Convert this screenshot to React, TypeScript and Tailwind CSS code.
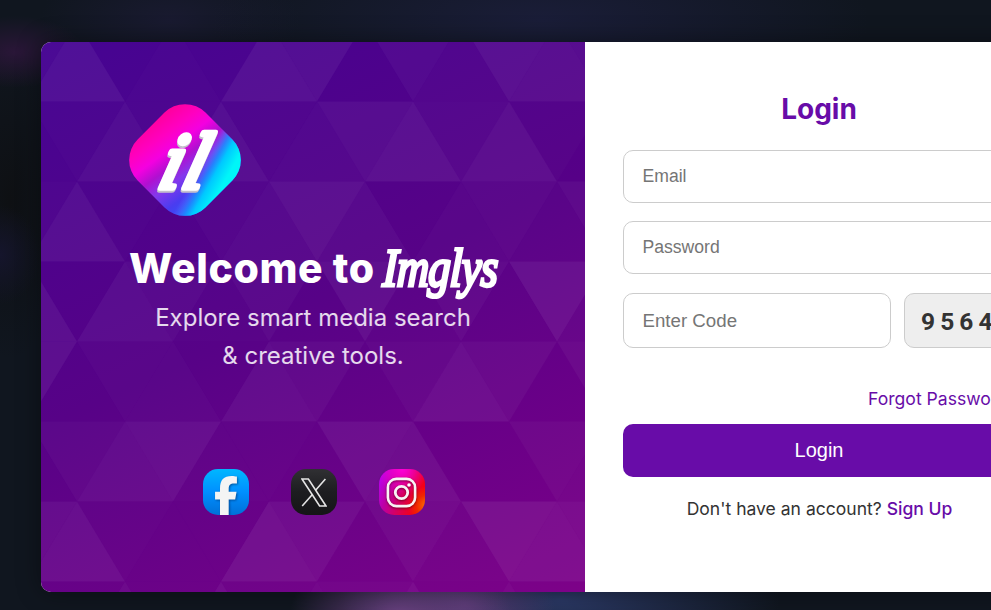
import { FaFacebookF } from "react-icons/fa6";

// Brightness of every triangle in the left panel's mosaic, row by row.
const TONES: number[][] = [
  [5, 8, 2, 3, 2, 8, 7, 1, 5, 3, 8, 7, 6],
  [2, 3, 6, 3, 7, 3, 4, 6, 8, 4, 7, 2, 0],
  [3, 7, 2, 1, 3, 5, 8, 5, 1, 3, 4, 2, 5],
  [7, 1, 6, 5, 2, 5, 1, 7, 2, 5, 1, 8, 3],
  [7, 1, 3, 3, 1, 6, 5, 1, 4, 7, 5, 0, 5],
  [1, 4, 6, 7, 2, 2, 1, 7, 6, 0, 0, 4, 3],
  [6, 7, 2, 1, 1, 8, 6, 1, 5, 2, 8, 7, 6],
  [1, 1, 5, 1, 6, 2, 4, 3, 6, 1, 4, 1, 1],
];

function Mosaic() {
  return (
    <svg className="absolute inset-0 h-full w-full" viewBox="41 42 544 550" aria-hidden="true">
      {TONES.map((row, r) =>
        row.map((tone, j) => {
          const x = 29 + j * 48;
          const top = 21.5 + r * 80;
          const bottom = top + 80;
          const up = (r + j) % 2 === 1;
          const points = up
            ? `${x},${top} ${x - 48},${bottom} ${x + 48},${bottom}`
            : `${x},${bottom} ${x - 48},${top} ${x + 48},${top}`;
          return <polygon key={`${r}-${j}`} points={points} fill="#fff" fillOpacity={tone * 0.0082} />;
        }),
      )}
    </svg>
  );
}

function Logo() {
  return (
    <svg className="h-28 w-28" viewBox="0 0 112 112" role="img" aria-label="Imglys">
      <defs>
        <linearGradient id="mark" gradientUnits="userSpaceOnUse" x1="22" y1="20" x2="84" y2="104">
          <stop offset="0" stopColor="#ff00a0" />
          <stop offset="0.16" stopColor="#ff00c0" />
          <stop offset="0.3" stopColor="#f400e0" />
          <stop offset="0.44" stopColor="#b010d0" />
          <stop offset="0.58" stopColor="#8438ec" />
          <stop offset="0.75" stopColor="#4a3cf0" />
          <stop offset="1" stopColor="#2060ff" />
        </linearGradient>
        <linearGradient id="cyan" gradientUnits="userSpaceOnUse" x1="73" y1="58" x2="103" y2="75">
          <stop offset="0" stopColor="#6a60ff" stopOpacity="0" />
          <stop offset="0.3" stopColor="#1c8cff" stopOpacity="0.85" />
          <stop offset="0.5" stopColor="#00c8ff" />
          <stop offset="0.85" stopColor="#00f6f8" />
        </linearGradient>
        <clipPath id="tile">
          <rect x="8" y="8" width="96" height="96" rx="29" transform="rotate(45 56 56)" />
        </clipPath>
      </defs>
      <g clipPath="url(#tile)">
        <rect width="112" height="112" fill="url(#mark)" />
        <rect width="112" height="112" fill="url(#cyan)" />
      </g>
      <g
        transform="translate(27 84) skewX(-15)"
        fontFamily="'Liberation Serif', serif"
        fontSize="80"
        fontStyle="italic"
        strokeLinejoin="round"
        strokeLinecap="round"
        strokeWidth="5.5"
      >
        <text x="0" y="2" textLength="46" fill="#c4c0cc" stroke="#c4c0cc">il</text>
        <text x="0" y="0" textLength="46" fill="#fff" stroke="#fff">il</text>
      </g>
    </svg>
  );
}

function XGlyph() {
  return (
    <svg className="h-[29px] w-[26px]" viewBox="0 0 26 29" fill="none" stroke="#e4e4e4" strokeWidth="1.6" aria-hidden="true">
      <path d="M1 1H7.4L25 28H18.6Z" />
      <path d="M24.4 1L14.6 12.2M11.6 16.2L1.2 28" />
    </svg>
  );
}

function InstagramGlyph() {
  return (
    <svg className="h-[31px] w-[31px] drop-shadow-[0_1px_1px_rgba(60,0,0,.6)]" viewBox="0 0 31 31" fill="none" stroke="#f8f3f5" aria-hidden="true">
      <rect x="1.9" y="1.9" width="27.2" height="27.2" rx="8.5" strokeWidth="2.6" />
      <circle cx="15.5" cy="15.5" r="6.2" strokeWidth="2.8" />
      <circle cx="23" cy="8" r="1.8" fill="#fff" stroke="none" />
    </svg>
  );
}

const FIELD =
  "block w-full rounded-[10px] border border-[#ccc] bg-white px-[18.5px] font-['Liberation_Sans',Arial,sans-serif] placeholder:text-[#757575] placeholder:opacity-100 outline-none";

export default function App() {
  return (
    <div className="h-[610px] w-full overflow-hidden bg-[#10161f] bg-[radial-gradient(ellipse_110px_70px_at_400px_615px,#68407f_0%,transparent_100%),radial-gradient(ellipse_90px_60px_at_465px_605px,#583b76_0%,transparent_100%),radial-gradient(ellipse_220px_65px_at_560px_600px,#2b3966_0%,transparent_100%),radial-gradient(ellipse_70px_36px_at_15px_52px,#2a1638_0%,transparent_100%),radial-gradient(ellipse_40px_50px_at_0px_255px,#15152c_0%,transparent_100%),radial-gradient(ellipse_330px_100px_at_540px_20px,#1a1d38_0%,transparent_100%),radial-gradient(ellipse_130px_60px_at_170px_20px,#191a30_0%,transparent_100%),radial-gradient(ellipse_60px_160px_at_10px_200px,#0e1013_0%,transparent_100%)] pt-[42px] pl-[41px] font-[Inter,sans-serif]">
      <main className="flex h-[550px] w-[1012px] overflow-hidden rounded-[10px] bg-white shadow-[0_0_24px_rgba(0,0,0,.4)]">
        <section className="relative h-full w-[544px] shrink-0 bg-[linear-gradient(155deg,#430091_0%,#560087_48%,#7c0088_100%)]">
          <Mosaic />
          <div className="relative flex h-full flex-col items-center pt-[62px]">
            <div className="w-[368px]">
              <Logo />
            </div>
            <h1 className="mt-[21px] flex h-[62px] w-[368px] items-center whitespace-nowrap text-white">
              <span className="w-[254px] shrink-0 text-[41px] leading-[62px] font-extrabold tracking-[0.6px]">Welcome to</span>
              <span className="origin-left scale-x-[0.82] -skew-x-3 font-['Liberation_Serif',serif] text-[54px] leading-[62px] font-normal tracking-[-0.7px] italic [-webkit-text-stroke:3.2px_#fff]">Imglys</span>
            </h1>
            <p className="text-center text-[24px] leading-[38px] text-white/85">
              Explore smart media search
              <br />
              &amp; creative tools.
            </p>
            <div className="mt-[94px] ml-px flex gap-[42px]">
              <a className="flex h-[46px] w-[46px] items-end justify-center overflow-hidden rounded-[15px] bg-linear-to-b from-[#00b7ff] via-[#008fff] to-[#0070d8]">
                <FaFacebookF className="h-[40px] w-[24px] translate-y-px text-[#f4f4f4] drop-shadow-[1px_1px_1px_rgba(0,40,100,.6)]" preserveAspectRatio="none" />
              </a>
              <a className="flex h-[46px] w-[46px] items-center justify-center rounded-[15px] bg-linear-to-b from-[#303033] via-[#1d1d20] to-[#151517]">
                <XGlyph />
              </a>
              <a className="flex h-[46px] w-[46px] items-center justify-center rounded-[15px] bg-[radial-gradient(circle_at_105%_80%,#ff7a00_0%,#f02800_18%,transparent_32%),radial-gradient(circle_at_50%_0%,#ff00d8_0%,transparent_50%),linear-gradient(110deg,#b800ff_0%,#bd00a0_30%,#e4003c_65%,#ff0000_90%)]">
                <InstagramGlyph />
              </a>
            </div>
          </div>
        </section>
        <section className="w-[468px] shrink-0 px-[38px] pt-[45px]">
          <h2 className="text-center text-[28px] leading-[44px] font-bold text-[#680ca8]">Login</h2>
          <form className="mt-[19px]" onSubmit={(e) => e.preventDefault()}>
            <input className={`${FIELD} h-[53px] text-[17.6px]`} type="email" placeholder="Email" />
            <input className={`${FIELD} mt-[18px] h-[53px] text-[17.6px]`} type="password" placeholder="Password" />
            <div className="mt-[19px] flex gap-[13px]">
              <input className={`${FIELD} h-[55px] max-w-[268px] text-[18.7px]`} placeholder="Enter Code" />
              <div className="flex h-[55px] w-[111px] shrink-0 items-center overflow-hidden rounded-[10px] border border-[#ccc] bg-[#eee] pt-[3px] pl-4 font-[Roboto,sans-serif] text-[24.5px] font-bold tracking-[5.1px] whitespace-nowrap text-[#333]">
                9564
              </div>
            </div>
            <a className="-mr-[2px] mt-[39px] block text-right text-[17.6px] leading-6 whitespace-nowrap text-[#680ca8]">Forgot Password?</a>
            <button className="mt-[13px] block h-[53px] w-full rounded-[10px] bg-[#680ca8] pb-[2px] font-['Liberation_Sans',Arial,sans-serif] text-[20px] text-white">
              Login
            </button>
          </form>
          <p className="mt-5 pl-px text-center text-[17.55px] leading-6 whitespace-nowrap text-[#333]">
            Don't have an account? <a className="font-medium text-[#680ca8]">Sign Up</a>
          </p>
        </section>
      </main>
    </div>
  );
}
